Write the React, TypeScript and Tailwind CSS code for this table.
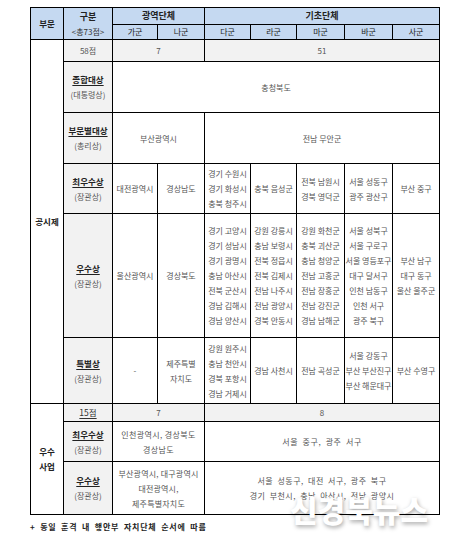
import React from "react";

const F = { fontFamily: '"Noto Sans CJK KR", "Noto Sans", sans-serif' };

const b = "border border-black text-center align-middle p-0";
const hd = "border border-black text-center align-middle p-0 bg-[#c5d9f1] text-[#222]";
const lab = "border border-black text-center align-middle p-0 bg-[#f2f2f2]";
const gray = "border border-black text-center align-middle p-0 bg-[#f2f2f2] text-[#555]";
const cell = "border border-black text-center align-middle p-0 text-[#555] leading-[15px]";

function Label({ t, s, u = true }: { t: string; s: string; u?: boolean }) {
  return (
    <div className="flex flex-col items-center leading-[15px]">
      <span className={u ? "font-bold text-[#222] underline underline-offset-2 text-[8.5px]" : "font-bold text-[#222] text-[8.5px]"}>{t}</span>
      <span className="text-[#555] text-[8px]">{s}</span>
    </div>
  );
}

function Lines({ items }: { items: string[] }) {
  return (
    <div className="flex flex-col items-center">
      {items.map((x, i) => (
        <span key={i} className="whitespace-nowrap">{x}</span>
      ))}
    </div>
  );
}

export default function App() {
  return (
    <div className="relative w-[456px] h-[545px] bg-white pl-[30px] pt-[7px]" style={F}>
      <table className="table-fixed border-collapse w-[409px] text-[8px]">
        <colgroup>
          <col className="w-[33px]" />
          <col className="w-[49px]" />
          <col className="w-[45px]" />
          <col className="w-[47px]" />
          <col className="w-[46px]" />
          <col className="w-[46px]" />
          <col className="w-[48px]" />
          <col className="w-[48px]" />
          <col className="w-[47px]" />
        </colgroup>
        <tbody>
          <tr className="h-[17px]">
            <td rowSpan={2} className={hd + " font-bold text-[8.5px]"}>부문</td>
            <td rowSpan={2} className={hd}>
              <div className="flex flex-col items-center leading-[15px]">
                <span className="font-bold text-[9px]">구분</span>
                <span className="text-[#333] text-[8px]">&lt;총73점&gt;</span>
              </div>
            </td>
            <td colSpan={2} className={hd + " font-bold text-[9px]"}>광역단체</td>
            <td colSpan={5} className={hd + " font-bold text-[9px]"}>기초단체</td>
          </tr>
          <tr className="h-[15px]">
            <td className={hd}>가군</td>
            <td className={hd}>나군</td>
            <td className={hd}>다군</td>
            <td className={hd}>라군</td>
            <td className={hd}>마군</td>
            <td className={hd}>바군</td>
            <td className={hd}>사군</td>
          </tr>
          <tr className="h-[22px]">
            <td rowSpan={6} className={b + " font-bold text-[#222] text-[8.5px]"}>공시제</td>
            <td className={gray}>58점</td>
            <td colSpan={2} className={gray}>7</td>
            <td colSpan={5} className={gray}>51</td>
          </tr>
          <tr className="h-[51px]">
            <td className={lab}><Label t="종합대상" s="(대통령상)" /></td>
            <td colSpan={7} className={cell}>충청북도</td>
          </tr>
          <tr className="h-[51px]">
            <td className={lab}><Label t="부문별대상" s="(총리상)" /></td>
            <td colSpan={2} className={cell}>부산광역시</td>
            <td colSpan={5} className={cell}>전남 무안군</td>
          </tr>
          <tr className="h-[50px]">
            <td className={lab}><Label t="최우수상" s="(장관상)" /></td>
            <td className={cell}>대전광역시</td>
            <td className={cell}>경상남도</td>
            <td className={cell}><Lines items={["경기 수원시", "경기 화성시", "충북 청주시"]} /></td>
            <td className={cell}>충북 음성군</td>
            <td className={cell}><Lines items={["전북 남원시", "경북 영덕군"]} /></td>
            <td className={cell}><Lines items={["서울 성동구", "광주 광산구"]} /></td>
            <td className={cell}>부산 중구</td>
          </tr>
          <tr className="h-[124px]">
            <td className={lab}><Label t="우수상" s="(장관상)" /></td>
            <td className={cell}>울산광역시</td>
            <td className={cell}>경상북도</td>
            <td className={cell}><Lines items={["경기 고양시", "경기 성남시", "경기 광명시", "충남 아산시", "전북 군산시", "경남 김해시", "경남 양산시"]} /></td>
            <td className={cell}><Lines items={["강원 강릉시", "충남 보령시", "전북 정읍시", "전북 김제시", "전남 나주시", "전남 광양시", "경북 안동시"]} /></td>
            <td className={cell}><Lines items={["강원 화천군", "충북 괴산군", "충남 청양군", "전남 고흥군", "전남 장흥군", "전남 강진군", "경남 남해군"]} /></td>
            <td className={cell}><Lines items={["서울 성북구", "서울 구로구", "서울 영등포구", "대구 달서구", "인천 남동구", "인천 서구", "광주 북구"]} /></td>
            <td className={cell}><Lines items={["부산 남구", "대구 동구", "울산 울주군"]} /></td>
          </tr>
          <tr className="h-[66px]">
            <td className={lab}><Label t="특별상" s="(장관상)" /></td>
            <td className={cell}>-</td>
            <td className={cell}><Lines items={["제주특별", "자치도"]} /></td>
            <td className={cell}><Lines items={["강원 원주시", "충남 천안시", "경북 포항시", "경남 거제시"]} /></td>
            <td className={cell}>경남 사천시</td>
            <td className={cell}>전남 곡성군</td>
            <td className={cell}><Lines items={["서울 강동구", "부산 부산진구", "부산 해운대구"]} /></td>
            <td className={cell}>부산 수영구</td>
          </tr>
          <tr className="h-[18px]">
            <td rowSpan={3} className={b + " font-bold text-[#222] text-[8.5px] leading-[15px]"}>
              <div className="flex flex-col items-center">
                <span>우수</span>
                <span>사업</span>
              </div>
            </td>
            <td className={lab + " text-[#333] text-[8.5px]"}><span className="underline underline-offset-2">15점</span></td>
            <td colSpan={2} className={gray}>7</td>
            <td colSpan={5} className={gray}>8</td>
          </tr>
          <tr className="h-[40px]">
            <td className={lab}><Label t="최우수상" s="(장관상)" /></td>
            <td colSpan={2} className={cell + " tracking-[0.4px]"}><Lines items={["인천광역시, 경상북도", "경상남도"]} /></td>
            <td colSpan={5} className={cell + " tracking-[0.6px] [word-spacing:2px]"}>서울 중구, 광주 서구</td>
          </tr>
          <tr className="h-[53px]">
            <td className={lab}><Label t="우수상" s="(장관상)" /></td>
            <td colSpan={2} className={cell + " tracking-[0.2px]"}><Lines items={["부산광역시, 대구광역시", "대전광역시,", "제주특별자치도"]} /></td>
            <td colSpan={5} className={cell + " tracking-[0.5px] [word-spacing:2px]"}><Lines items={["서울 성동구, 대전 서구, 광주 북구", "경기 부천시, 충남 아산시, 전남 광양시"]} /></td>
          </tr>
        </tbody>
      </table>
      <p className="mt-[7px] text-[8px] font-bold text-[#222] tracking-[0.8px] [word-spacing:2px] leading-[10px]">
        + 동일 훈격 내 행안부 자치단체 순서에 따름
      </p>
      <div className="absolute left-[290px] top-[494px] text-[30px] font-black text-white tracking-[0px] leading-none [text-shadow:1px_2px_4px_rgba(0,0,0,0.35)]">
        신경북뉴스
      </div>
    </div>
  );
}
